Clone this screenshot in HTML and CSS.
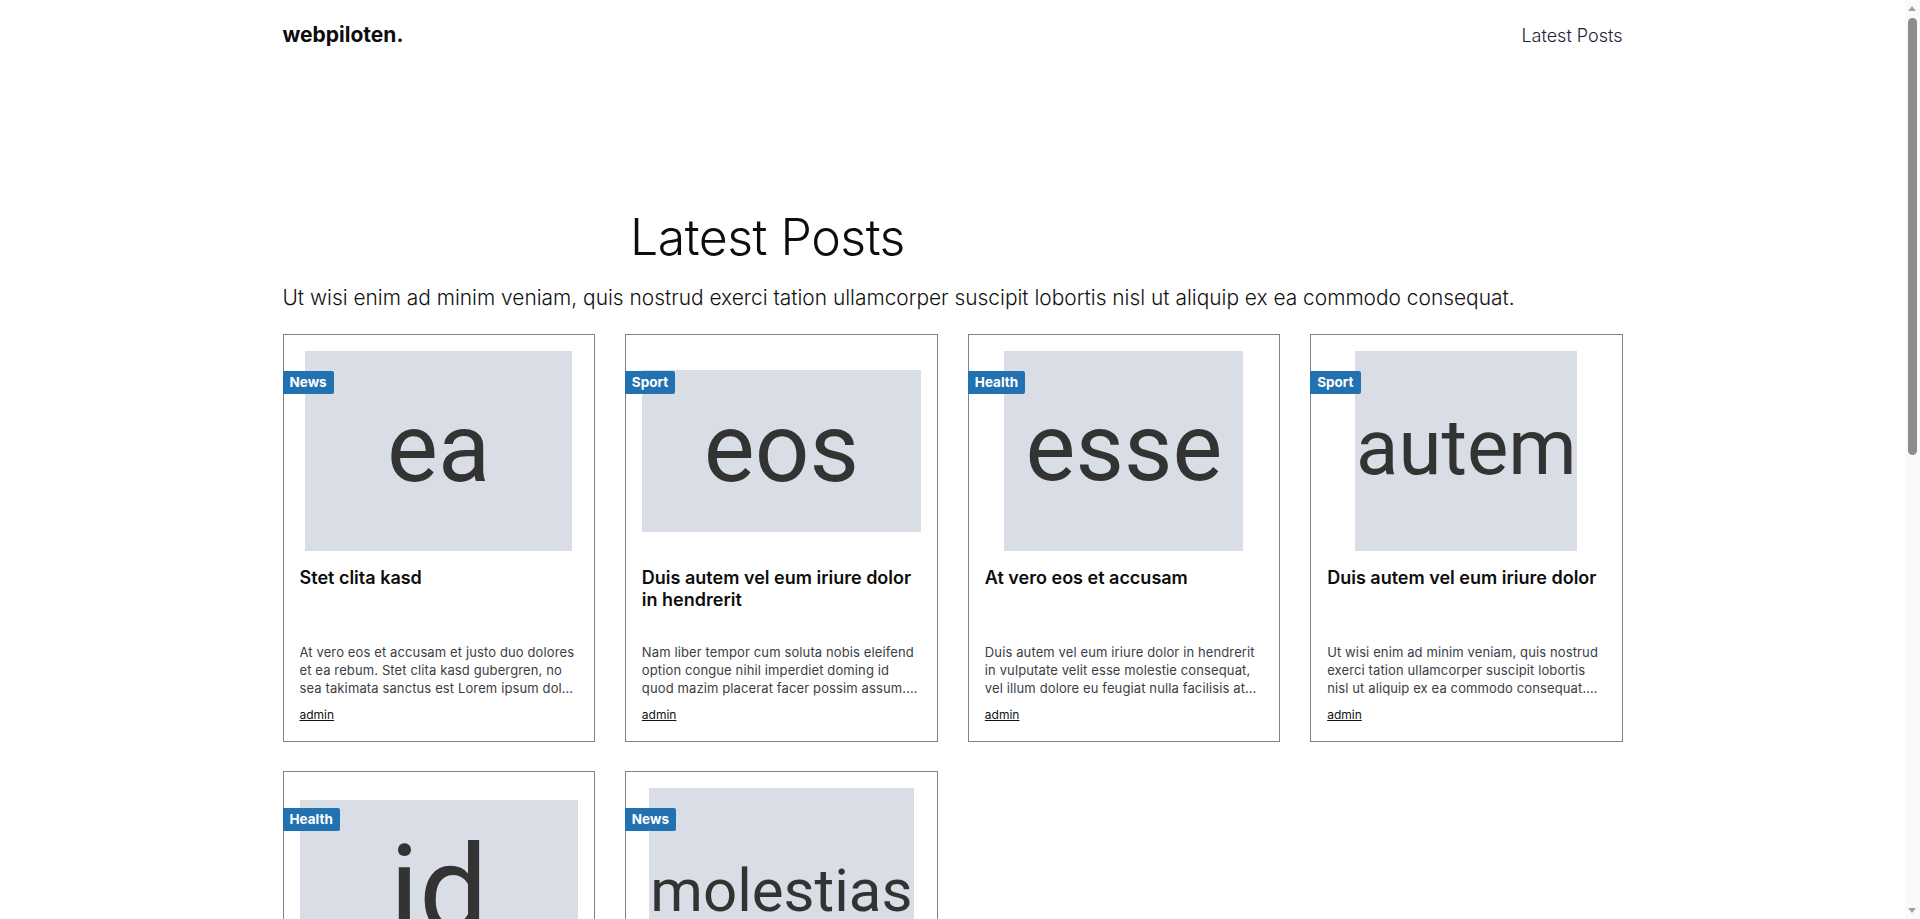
FILE: index.html
```html
<!DOCTYPE html>
<html lang="de">
<head>
<meta charset="utf-8">
<title>webpiloten.</title>
<link rel="stylesheet" href="styles.css">
</head>
<body>
<div class="container">
  <header class="site-header">
    <a class="logo" href="#">webpiloten.</a>
    <nav class="nav"><a href="#">Latest Posts</a></nav>
  </header>

  <main class="content">
    <div class="intro">
      <div class="intro-head"><h1 class="title">Latest Posts</h1></div>
      <p class="lead">Ut wisi enim ad minim veniam, quis nostrud exerci tation ullamcorper suscipit lobortis nisl ut aliquip ex ea commodo consequat.</p>
    </div>

    <div class="grid">
      <article class="card">
        <span class="badge">News</span>
        <div class="media"><div class="ph" style="width:267px;height:200px;font-size:96px">ea</div></div>
        <h2 class="card-title">Stet clita kasd</h2>
        <p class="excerpt">At vero eos et accusam et justo duo dolores et ea rebum. Stet clita kasd gubergren, no sea takimata sanctus est Lorem ipsum dolor sit amet.</p>
        <a class="author" href="#">admin</a>
      </article>

      <article class="card">
        <span class="badge">Sport</span>
        <div class="media"><div class="ph" style="width:279px;height:162px;font-size:96px">eos</div></div>
        <h2 class="card-title">Duis autem vel eum iriure dolor in hendrerit</h2>
        <p class="excerpt">Nam liber tempor cum soluta nobis eleifend option congue nihil imperdiet doming id quod mazim placerat facer possim assum. Lorem ipsum dolor sit amet.</p>
        <a class="author" href="#">admin</a>
      </article>

      <article class="card">
        <span class="badge">Health</span>
        <div class="media"><div class="ph" style="width:239px;height:200px;font-size:94px">esse</div></div>
        <h2 class="card-title">At vero eos et accusam</h2>
        <p class="excerpt">Duis autem vel eum iriure dolor in hendrerit in vulputate velit esse molestie consequat, vel illum dolore eu feugiat nulla facilisis at vero eros et accumsan.</p>
        <a class="author" href="#">admin</a>
      </article>

      <article class="card">
        <span class="badge">Sport</span>
        <div class="media"><div class="ph" style="width:222px;height:200px;font-size:78px">autem</div></div>
        <h2 class="card-title">Duis autem vel eum iriure dolor</h2>
        <p class="excerpt">Ut wisi enim ad minim veniam, quis nostrud exerci tation ullamcorper suscipit lobortis nisl ut aliquip ex ea commodo consequat. Duis autem vel eum iriure.</p>
        <a class="author" href="#">admin</a>
      </article>

      <article class="card">
        <span class="badge">Health</span>
        <div class="media"><div class="ph ph-id" style="width:278px;height:176px;font-size:122px">id</div></div>
        <h2 class="card-title">Lorem ipsum dolor sit amet</h2>
        <p class="excerpt">Consetetur sadipscing elitr, sed diam nonumy eirmod tempor invidunt ut labore et dolore magna aliquyam erat, sed diam voluptua.</p>
        <a class="author" href="#">admin</a>
      </article>

      <article class="card">
        <span class="badge">News</span>
        <div class="media"><div class="ph ph-low" style="width:265px;height:200px;font-size:60px">molestias</div></div>
        <h2 class="card-title">Nam liber tempor cum soluta</h2>
        <p class="excerpt">Nobis eleifend option congue nihil imperdiet doming id quod mazim placerat facer possim assum. Lorem ipsum dolor sit amet.</p>
        <a class="author" href="#">admin</a>
      </article>
    </div>
  </main>
</div>

<div class="scrollbar" aria-hidden="true">
  <span class="sb-arrow sb-up"></span>
  <span class="sb-thumb"></span>
  <span class="sb-arrow sb-down"></span>
</div>
</body>
</html>
```

FILE: styles.css
```css
* { box-sizing: border-box; }

html, body {
  margin: 0;
  padding: 0;
  background: #ffffff;
}

body {
  font-family: Inter, "Noto Sans", "Liberation Sans", sans-serif;
  color: #111111;
  padding-right: 15px;
}

a { color: inherit; text-decoration: none; }

.container {
  max-width: 1340px;
  margin: 0 auto;
}

.site-header {
  display: flex;
  justify-content: space-between;
  align-items: baseline;
  padding-top: 23px;
}

.logo {
  font-size: 21px;
  line-height: 24px;
  font-weight: 700;
  letter-spacing: 0;
  color: #0d0d0d;
}

.nav a {
  font-size: 18px;
  line-height: 24px;
  font-weight: 300;
  color: #1b2233;
}

.content {
  padding-top: 159px;
  padding-bottom: 60px;
}

.intro-head {
  width: 970px;
  text-align: center;
}

.title {
  margin: 0;
  font-size: 50px;
  line-height: 60px;
  font-weight: 300;
  letter-spacing: -0.5px;
  color: #0d0d0d;
}

.lead {
  margin: 17px 0 0;
  font-size: 20.9px;
  line-height: 28px;
  font-weight: 300;
  color: #111111;
}

.grid {
  display: grid;
  grid-template-columns: repeat(4, 1fr);
  gap: 29px 30px;
  margin-top: 22px;
}

.card {
  position: relative;
  display: flex;
  flex-direction: column;
  border: 1px solid #79838f;
  padding: 16px;
  background: #ffffff;
}

.badge {
  position: absolute;
  left: -1px;
  top: 36px;
  background: #2271b1;
  color: #ffffff;
  font-size: 13.5px;
  line-height: 23px;
  font-weight: 700;
  padding: 0 7px;
  border-radius: 0 2px 2px 0;
}

.media {
  height: 200px;
  display: flex;
  align-items: center;
  justify-content: center;
}

.ph {
  display: flex;
  align-items: center;
  justify-content: center;
  overflow: hidden;
  background: #d9dde5;
  color: #333333;
  font-family: Roboto, "Liberation Sans", sans-serif;
  font-weight: 400;
  line-height: 1;
  white-space: nowrap;
  padding-bottom: 6px;
}

.ph-id {
  padding-top: 6px;
  padding-bottom: 0;
}

.ph-low {
  padding-top: 5px;
  padding-bottom: 0;
}

.card-title {
  margin: 16px 0 0;
  height: 44px;
  font-size: 18px;
  line-height: 22px;
  font-weight: 600;
  color: #0d0d0d;
}

.excerpt {
  margin: 32px 0 0;
  font-size: 13px;
  line-height: 18px;
  font-weight: 400;
  letter-spacing: 0.12px;
  color: #3a3d45;
  display: -webkit-box;
  -webkit-box-orient: vertical;
  -webkit-line-clamp: 3;
  overflow: hidden;
}

.author {
  margin-top: 8px;
  font-size: 12px;
  line-height: 20px;
  color: #111111;
  text-decoration: underline;
  align-self: flex-start;
}

/* painted browser scrollbar */
.scrollbar {
  position: fixed;
  top: 0;
  right: 0;
  width: 15px;
  height: 100vh;
  background: #fafafa;
}

.sb-thumb {
  position: absolute;
  left: 3px;
  top: 18px;
  width: 9px;
  height: 437px;
  border-radius: 5px;
  background: #8c8c8c;
}

.sb-arrow {
  position: absolute;
  left: 3px;
  width: 0;
  height: 0;
  border-left: 4.5px solid transparent;
  border-right: 4.5px solid transparent;
}

.sb-up {
  top: 6px;
  border-bottom: 5px solid #a3a3a3;
}

.sb-down {
  bottom: 6px;
  border-top: 5px solid #a3a3a3;
}
```
